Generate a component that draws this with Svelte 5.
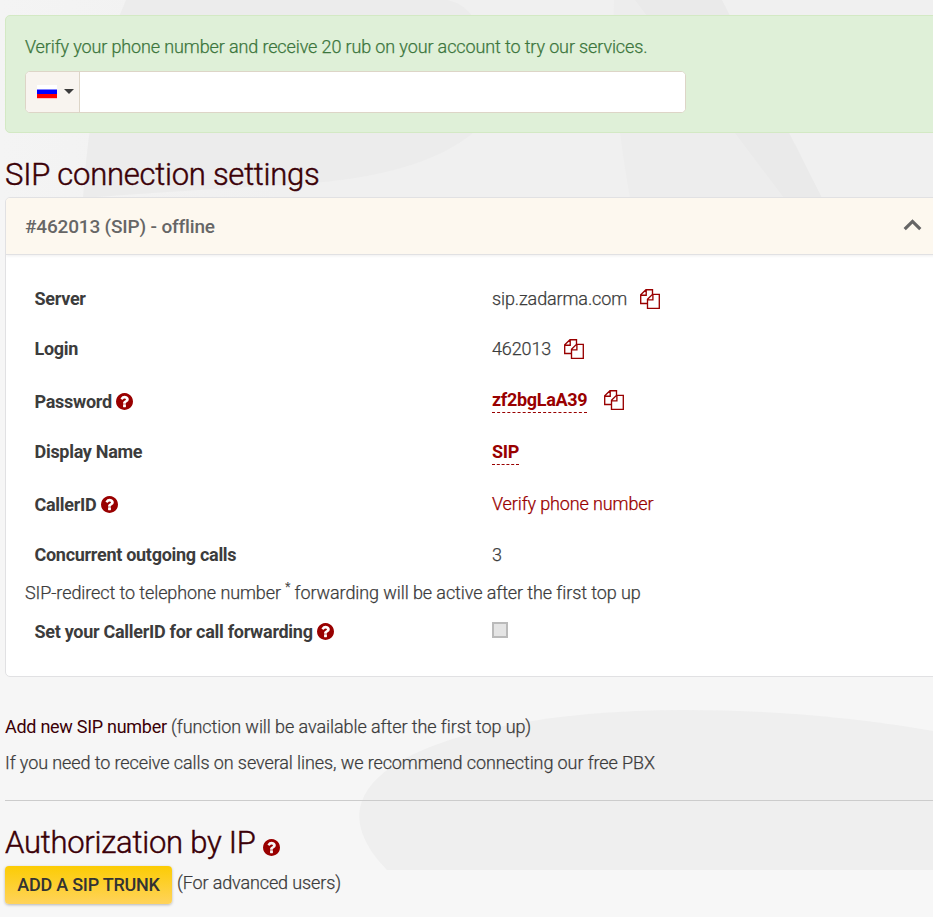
<script>
  const rows = [
    { label: 'Server', value: 'sip.zadarma.com', copy: true, kind: 'plain' },
    { label: 'Login', value: '462013', copy: true, kind: 'plain' },
    { label: 'Password', value: 'zf2bgLaA39', help: true, copy: true, kind: 'edit' },
    { label: 'Display Name', value: 'SIP', kind: 'edit' },
    { label: 'CallerID', value: 'Verify phone number', help: true, kind: 'link' },
    { label: 'Concurrent outgoing calls', value: '3', kind: 'plain' }
  ];
</script>

{#snippet helpIcon()}
  <svg class="help" viewBox="128 128 1536 1536" aria-hidden="true"><path d="M1024 1376v-192q0-14-9-23t-23-9h-192q-14 0-23 9t-9 23v192q0 14 9 23t23 9h192q14 0 23-9t9-23zM1280 704q0-88-55.5-163t-138.500-116-170-41q-243 0-371 213-15 24 8 42l132 100q7 6 19 6 16 0 25-12 53-68 86-92 34-24 86-24 48 0 85.500 26t37.500 59q0 38-20 61t-68 45q-63 28-115.500 86.500t-52.500 125.500v36q0 14 9 23t23 9h192q14 0 23-9t9-23q0-19 21.500-49.500t54.500-49.500q32-18 49-28.500t46-35 44.500-48 28-60.500 12.500-81zM1664 896q0 209-103 385.500t-279.500 279.500-385.500 103-385.500-103-279.500-279.500-103-385.500 103-385.500 279.500-279.500 385.500-103 385.500 103 279.500 279.500 103 385.500z"/></svg>
{/snippet}

{#snippet copyIcon()}
  <svg class="copy" viewBox="0 0 20 20" aria-hidden="true"><path d="M7.500 14.500H.700V5.800L6 .700H12.500V5.300M.700 6.200H6.200V.700M7.500 10.200L12.500 5.300H19.300V19.300H7.500ZM7.500 10.800H12.900V5.300"/></svg>
{/snippet}

<div class="page">
  <svg class="backdrop" width="933" height="917" viewBox="0 0 933 917" aria-hidden="true">
    <defs>
      <linearGradient id="shade" x1="0" x2="1" y1="0" y2="0">
        <stop offset="0" stop-color="#f4f4f4"/><stop offset=".3" stop-color="#f0f0f0"/><stop offset="1" stop-color="#f0f0f0"/>
      </linearGradient>
    </defs>
    <path fill="url(#shade)" d="M0 0H933V200H0Z"/>
    <path fill="#ececec" d="M126 0H448Q482 8 486 60Q490 112 473 133Q421 176 300 184Q180 191 83 198Q90 80 126 0Z"/>
    <path fill="#ededed" d="M614 0H722L822 198H630Q610 90 614 0Z"/>
    <path fill="#eaeaea" d="M635 0H722L822 198H784Z"/>
    <path fill="#efefef" d="M387 870C363 846 357 824 360 808C372 745 520 710 683 710C785 710 870 720 933 731V870Z"/>
    <path fill="#f7f7f7" d="M0 870H933V917H0Z"/>
  </svg>

  <section class="alert">
    <p>Verify your phone number and receive 20 rub on your account to try our services.</p>
    <div class="phone">
      <button class="country" aria-label="Country">
        <span class="flag"></span><span class="caret"></span>
      </button>
      <input type="tel" aria-label="Phone number" />
    </div>
  </section>

  <h2>SIP connection settings</h2>

  <section class="panel">
    <header>
      <span>#462013 (SIP) - offline</span>
      <svg width="19" height="12" viewBox="0 0 19 12" aria-hidden="true"><path d="M1.700 10.200L9.500 2.400L17.300 10.200" fill="none" stroke="#666" stroke-width="3.200"/></svg>
    </header>
    <div class="body">
      {#each rows as row}
        <div class="row" class:tall={row.help}>
          <div class="label"><b>{row.label}</b>{#if row.help}{@render helpIcon()}{/if}</div>
          <div class="value"><span class={row.kind}>{row.value}</span>{#if row.copy}{@render copyIcon()}{/if}</div>
        </div>
      {/each}
      <p class="redirect">SIP-redirect to telephone number <sup>*</sup> forwarding will be active after the first top up</p>
      <div class="row last">
        <div class="label"><b>Set your CallerID for call forwarding</b>{@render helpIcon()}</div>
        <div class="value"><span class="check"></span></div>
      </div>
    </div>
  </section>

  <p class="add"><span>Add new SIP number</span> (function will be available after the first top up)</p>
  <p class="note">If you need to receive calls on several lines, we recommend connecting our free PBX</p>
  <hr />
  <h2 class="auth">Authorization by IP {@render helpIcon()}</h2>
  <div class="trunk"><button>ADD A SIP TRUNK</button><span>(For advanced users)</span></div>
</div>

<style>
  :global(body) { margin: 0; background: #f6f6f6; overflow: hidden; }
  .page { position: relative; box-sizing: border-box; width: 933px; height: 917px; overflow: hidden; padding: 15px 0 0 5px; font: 300 18px/26px Roboto, sans-serif; letter-spacing: -.12px; color: #3c3c3c; -webkit-text-stroke: .25px; }
  .page > :not(.backdrop) { position: relative; }
  .backdrop { position: absolute; left: 0; top: 0; }
  p, h2 { margin: 0; font-weight: 300; white-space: nowrap; }
  .alert { box-sizing: border-box; width: 940px; height: 118px; padding: 18px 19px; border: 1px solid #d3e9c4; border-radius: 5px; background: #dff0d8; color: #3c763d; }
  .phone { display: flex; box-sizing: border-box; width: 661px; height: 42px; margin-top: 11px; border: 1px solid #ddd5c7; border-radius: 5px; overflow: hidden; background: #fff; }
  .country { display: flex; align-items: center; box-sizing: border-box; width: 54px; padding: 0 0 0 11px; border: 0; border-right: 1px solid #ddd5c7; background: #f8f4ef; }
  .flag { width: 20px; height: 14px; background: linear-gradient(#fff 0 4px, #8080ff 4px 5px, #00f 5px 9px, #f00 9px 13px, #ffc0c0 13px); }
  .caret { margin: -1px 0 0 7px; border: 5px solid transparent; border-top-color: #3c3c3c; border-bottom: 0; }
  .phone input { flex: 1; border: 0; outline: 0; background: #fff; }
  h2 { margin-top: 22px; font-size: 31px; line-height: 40px; letter-spacing: -.25px; color: #3b0007; -webkit-text-stroke: .45px; }
  .panel { box-sizing: border-box; width: 940px; height: 480px; margin-top: 2px; border: 1px solid #e1e1e3; border-radius: 5px; background: #fff; overflow: hidden; }
  header { display: flex; align-items: center; box-sizing: border-box; height: 57px; padding: 1px 22px 0 19px; border-bottom: 1px solid #e1e1e3; box-shadow: 0 1px 3px #0001; background: #fdf8ef; color: #666; font-weight: 500; font-size: 19px; letter-spacing: -.17px; -webkit-text-stroke: 0; }
  header svg { margin: -3px 0 0 auto; }
  .body { padding-top: 19px; }
  .row { display: flex; height: 50px; box-sizing: border-box; padding: 12px 0 0 28.500px; }
  .tall { height: 53px; }
  .tall .label { padding-top: 3px; }
  .tall .value { padding-top: 1px; }
  .label { display: flex; align-items: center; box-sizing: border-box; width: 457.500px; height: 26px; }
  .tall .label { height: 29px; }
  .label b { font-weight: 700; letter-spacing: -.29px; -webkit-text-stroke: 0; }
  .label .help { margin: -1px 0 0 4.500px; }
  .help { width: 17px; height: 17px; fill: #900; flex: none; }
  .value { display: flex; height: 26px; }
  .copy { width: 20px; height: 20px; margin: 3px 0 0 13px; fill: none; stroke: #900; stroke-width: 1.350; }
  .edit { height: 25px; font-weight: 700; letter-spacing: -.32px; color: #900; border-bottom: 1px dashed #900; -webkit-text-stroke: 0; }
  .edit + .copy { margin-left: 17px; }
  .link { color: #900; padding-top: 1px; }
  .redirect { padding-left: 19px; letter-spacing: -.09px; }
  sup { font-size: 12px; line-height: 0; vertical-align: 8px; }
  .last { padding-top: 13px; }
  .check { width: 16px; height: 16px; margin-top: 3px; box-sizing: border-box; border: 2px solid #bbb; background: #e5e5e5; }
  .add { margin-top: 37px; letter-spacing: -.07px; }
  .add span { color: #3b0007; font-weight: 400; letter-spacing: -.28px; -webkit-text-stroke: 0; }
  .note { margin-top: 10px; letter-spacing: -.095px; }
  hr { width: 940px; height: 1px; margin: 24px 0 0; border: 0; background: #ccc; }
  .auth .help { margin-left: 0; vertical-align: -3px; }
  .trunk { display: flex; margin-top: 3px; line-height: 34px; }
  .trunk button { box-sizing: border-box; width: 167px; height: 38px; padding: 0; border: 0; border-radius: 4px; background: linear-gradient(#fccc04, #ffd35b); box-shadow: 0 1px 3px #0004; font: 500 18px/38px Roboto, sans-serif; letter-spacing: -.25px; color: #333; -webkit-text-stroke: 0; }
  .trunk span { margin-left: 5px; }
</style>
